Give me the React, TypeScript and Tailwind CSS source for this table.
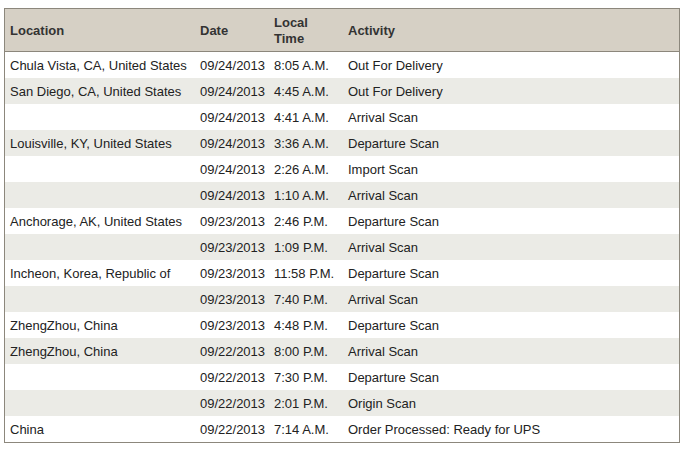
// Shipment progress table — plain tracking-history layout with zebra rows.

type Row = { loc: string; date: string; time: string; activity: string }

const rows: Row[] = [
  { loc: 'Chula Vista, CA, United States', date: '09/24/2013', time: '8:05 A.M.', activity: 'Out For Delivery' },
  { loc: 'San Diego, CA, United States', date: '09/24/2013', time: '4:45 A.M.', activity: 'Out For Delivery' },
  { loc: '', date: '09/24/2013', time: '4:41 A.M.', activity: 'Arrival Scan' },
  { loc: 'Louisville, KY, United States', date: '09/24/2013', time: '3:36 A.M.', activity: 'Departure Scan' },
  { loc: '', date: '09/24/2013', time: '2:26 A.M.', activity: 'Import Scan' },
  { loc: '', date: '09/24/2013', time: '1:10 A.M.', activity: 'Arrival Scan' },
  { loc: 'Anchorage, AK, United States', date: '09/23/2013', time: '2:46 P.M.', activity: 'Departure Scan' },
  { loc: '', date: '09/23/2013', time: '1:09 P.M.', activity: 'Arrival Scan' },
  { loc: 'Incheon, Korea, Republic of', date: '09/23/2013', time: '11:58 P.M.', activity: 'Departure Scan' },
  { loc: '', date: '09/23/2013', time: '7:40 P.M.', activity: 'Arrival Scan' },
  { loc: 'ZhengZhou, China', date: '09/23/2013', time: '4:48 P.M.', activity: 'Departure Scan' },
  { loc: 'ZhengZhou, China', date: '09/22/2013', time: '8:00 P.M.', activity: 'Arrival Scan' },
  { loc: '', date: '09/22/2013', time: '7:30 P.M.', activity: 'Departure Scan' },
  { loc: '', date: '09/22/2013', time: '2:01 P.M.', activity: 'Origin Scan' },
  { loc: 'China', date: '09/22/2013', time: '7:14 A.M.', activity: 'Order Processed: Ready for UPS' },
]

// column grid shared by header and body so the text lines up
const cols = 'grid grid-cols-[190px_74px_74px_1fr]'

export default function App() {
  return (
    <div className="bg-white min-h-[459px] pt-[8px] px-[4px] font-['Liberation_Sans',Arial,sans-serif] text-[13px] text-[#222]">
      <div className="border border-[#8c877c]">
        {/* ── header ── */}
        <div className={`${cols} h-[43px] bg-[#d6d0c5] border-b border-[#8c877c] font-bold text-[13px] text-[#333] leading-[16px]`}>
          <div className="pl-[5px] pt-[1px] flex items-center">Location</div>
          <div className="pl-[5px] pt-[1px] flex items-center">Date</div>
          <div className="pl-[5px] pt-[1px] flex items-center">
            Local
            <br />
            Time
          </div>
          <div className="pl-[5px] pt-[1px] flex items-center">Activity</div>
        </div>

        {/* ── body: odd rows white, even rows light stone ── */}
        {rows.map((r, i) => (
          <div
            key={i}
            className={`${cols} h-[26px] pt-[2px] items-center leading-[16px] ${i % 2 === 1 ? 'bg-[#ebebe6]' : 'bg-white'}`}
          >
            <div className="pl-[5px] whitespace-nowrap">{r.loc}</div>
            <div className="pl-[5px]">{r.date}</div>
            <div className="pl-[5px] whitespace-nowrap">{r.time}</div>
            <div className="pl-[5px]">{r.activity}</div>
          </div>
        ))}
      </div>
    </div>
  )
}
